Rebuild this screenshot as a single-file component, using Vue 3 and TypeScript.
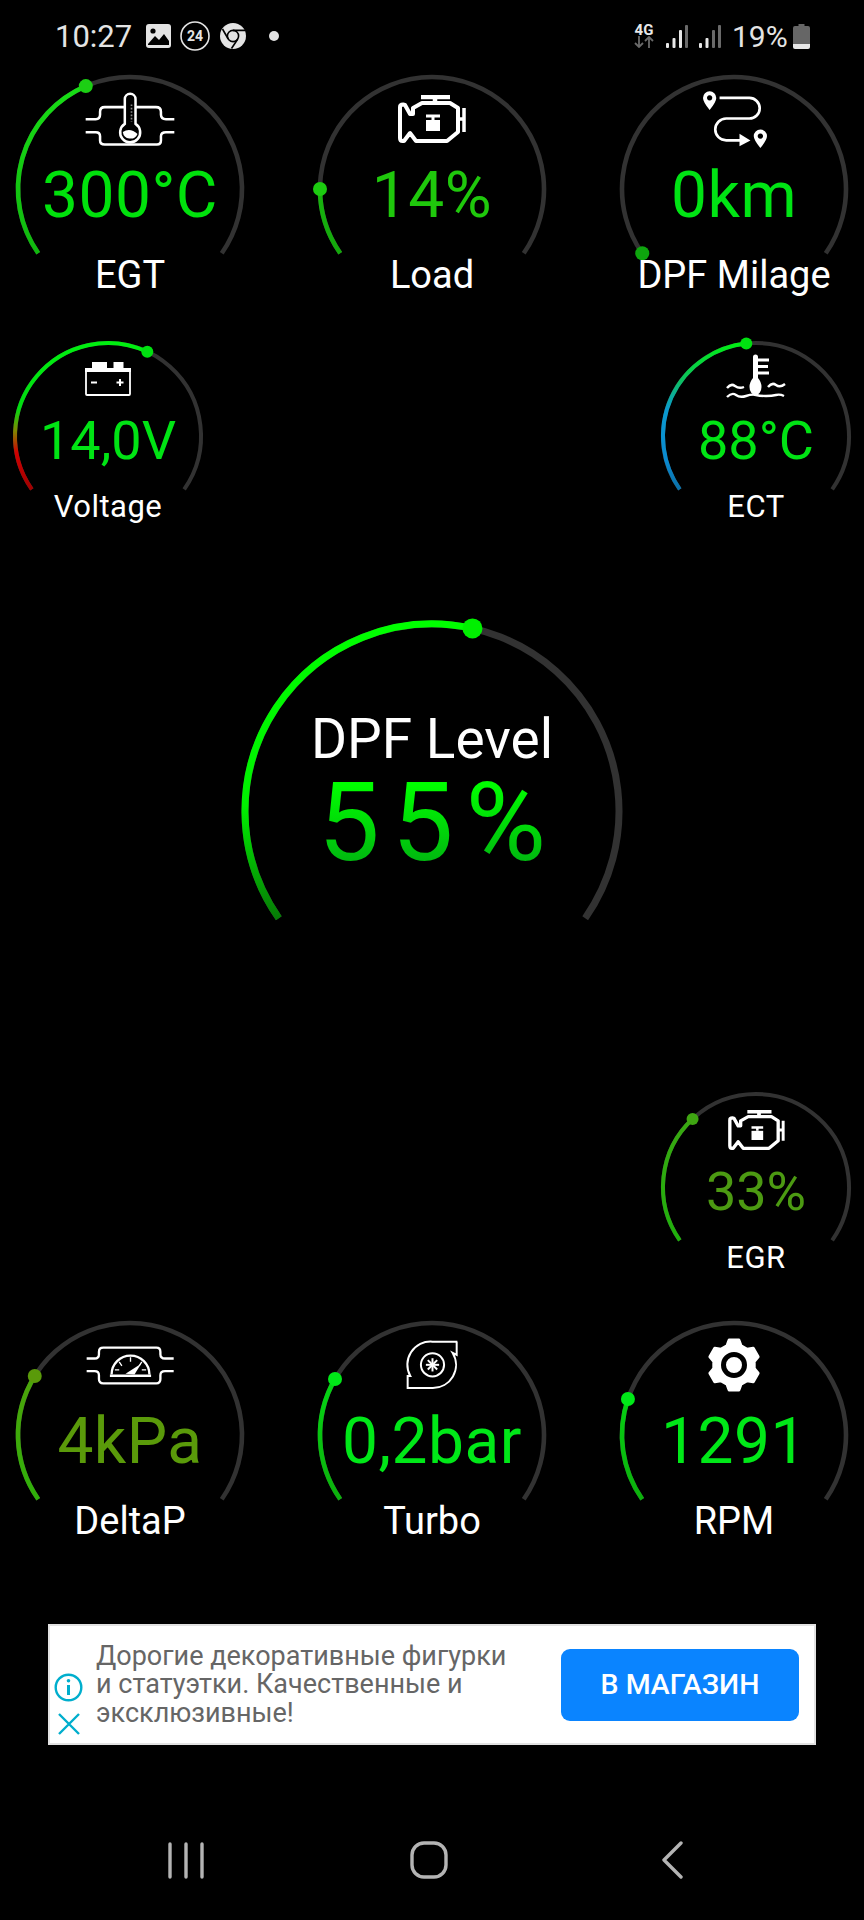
<script setup lang="ts">
interface Stop {
  at: number
  color: string
}

interface Gauge {
  id: string
  label: string
  value: string
  icon: string
  size: 'large' | 'medium'
  t: number
  valueColor: string
  dotColor: string
  stops: Stop[]
}

const flat = (top: string, bottom: string): Stop[] => [
  { at: 0, color: top },
  { at: 1, color: bottom },
]

const topRow: Gauge[] = [
  { id: 'egt', label: 'EGT', value: '300°C', icon: 'egt', size: 'large', t: 0.407, valueColor: '#00e20c', dotColor: '#1ccf14', stops: flat('#18e016', '#10b80e') },
  { id: 'load', label: 'Load', value: '14%', icon: 'engine', size: 'large', t: 0.14, valueColor: '#1fc80c', dotColor: '#1ccb10', stops: flat('#1ccb10', '#14a80c') },
  { id: 'milage', label: 'DPF Milage', value: '0km', icon: 'route', size: 'large', t: 0, valueColor: '#00e414', dotColor: '#0ea50e', stops: flat('#0ea50e', '#0ea50e') },
]

const voltage: Gauge = {
  id: 'voltage', label: 'Voltage', value: '14,0V', icon: 'battery', size: 'medium', t: 0.6, valueColor: '#00e414', dotColor: '#00e010',
  stops: [
    { at: 0, color: '#00f010' },
    { at: 0.45, color: '#00dc10' },
    { at: 0.6, color: '#7f8a00' },
    { at: 0.75, color: '#d00000' },
    { at: 1, color: '#a00000' },
  ],
}

const ect: Gauge = {
  id: 'ect', label: 'ECT', value: '88°C', icon: 'coolant', size: 'medium', t: 0.476, valueColor: '#00e414', dotColor: '#00e010',
  stops: [
    { at: 0, color: '#00f010' },
    { at: 0.26, color: '#0cc060' },
    { at: 0.46, color: '#0a9ad0' },
    { at: 0.8, color: '#0a8ad0' },
    { at: 1, color: '#0a70a8' },
  ],
}

const egr: Gauge = {
  id: 'egr', label: 'EGR', value: '33%', icon: 'engine', size: 'medium', t: 0.328, valueColor: '#4c9a12', dotColor: '#3fa512', stops: flat('#3fa512', '#1fb10c'),
}

const bottomRow: Gauge[] = [
  { id: 'delta', label: 'DeltaP', value: '4kPa', icon: 'pressure', size: 'large', t: 0.267, valueColor: '#5a9a0a', dotColor: '#5a9a0a', stops: flat('#5a9f0a', '#2fb00a') },
  { id: 'turbo', label: 'Turbo', value: '0,2bar', icon: 'turbo', size: 'large', t: 0.26, valueColor: '#00e818', dotColor: '#00e818', stops: flat('#00e818', '#0cb00c') },
  { id: 'rpm', label: 'RPM', value: '1291', icon: 'gear', size: 'large', t: 0.215, valueColor: '#00e818', dotColor: '#00e818', stops: flat('#00e818', '#0cb00c') },
]

const specs = {
  large: { w: 240, h: 219, cy: 113, r: 112, stroke: 4.6, dot: 7 },
  medium: { w: 192, h: 181, cy: 94, r: 93, stroke: 4, dot: 6 },
}

function pt(cx: number, cy: number, r: number, t: number) {
  const a = ((215 - 250 * t) * Math.PI) / 180
  return { x: cx + r * Math.cos(a), y: cy - r * Math.sin(a) }
}

function arc(cx: number, cy: number, r: number, from: number, to: number) {
  const a = pt(cx, cy, r, from)
  const b = pt(cx, cy, r, to)
  const large = (to - from) * 250 > 180 ? 1 : 0
  return `M${a.x.toFixed(2)} ${a.y.toFixed(2)} A${r} ${r} 0 ${large} 1 ${b.x.toFixed(2)} ${b.y.toFixed(2)}`
}

function gaugeArc(g: Gauge, from: number, to: number) {
  const s = specs[g.size]
  return arc(s.w / 2, s.cy, s.r, from, to)
}

function dotAt(g: Gauge) {
  const s = specs[g.size]
  return pt(s.w / 2, s.cy, s.r, g.t)
}

const bigEnd = pt(192, 190, 187, 0.55)

const gearPath = (() => {
  const parts: string[] = []
  for (let i = 0; i < 6; i++) {
    const c = 60 * i - 90
    const seq: [number, number][] = [[c - 20, 20.5], [c - 11, 25.5], [c + 11, 25.5], [c + 20, 20.5]]
    for (const [deg, r] of seq) {
      const a = (deg * Math.PI) / 180
      parts.push(`${parts.length ? 'L' : 'M'}${(27 + r * Math.cos(a)).toFixed(2)} ${(27 + r * Math.sin(a)).toFixed(2)}`)
    }
  }
  return parts.join(' ') + ' Z'
})()

const turboBlades = [0, 45, 90, 135]
</script>

<template>
  <div class="screen">
    <div class="status">
      <span class="time">10:27</span>
      <svg class="st-image" width="25" height="24" viewBox="0 0 25 24">
        <rect width="25" height="24" rx="3" fill="#e4e4e4" />
        <circle cx="7" cy="7" r="2.6" fill="#000" />
        <path d="M2 20 L9 12 L13 16 L18 10 L23 17 V21 H2 Z" fill="#000" />
      </svg>
      <svg class="st-count" width="30" height="30" viewBox="0 0 30 30">
        <circle cx="15" cy="15" r="14" fill="none" stroke="#e4e4e4" stroke-width="1.6" />
        <text x="15" y="20" text-anchor="middle" class="count-text">24</text>
      </svg>
      <svg class="st-chrome" width="26" height="26" viewBox="0 0 26 26">
        <circle cx="13" cy="13" r="13" fill="#e4e4e4" />
        <circle cx="13" cy="13" r="5.6" fill="none" stroke="#000" stroke-width="1.6" />
        <path d="M13 7.4 H25 M8.2 16 L2.5 6 M17.8 16 L11.5 25.5" stroke="#000" stroke-width="1.6" />
      </svg>
      <span class="st-dot"></span>

      <div class="status-right">
        <div class="net">
          <span class="net-type">4G</span>
          <svg width="20" height="12" viewBox="0 0 20 12">
            <path d="M5 0 V11 M1 7 L5 11 L9 7" fill="none" stroke="#6a6a6a" stroke-width="1.8" />
            <path d="M15 12 V1 M11 5 L15 1 L19 5" fill="none" stroke="#6a6a6a" stroke-width="1.8" />
          </svg>
        </div>
        <svg class="signal" width="22" height="23" viewBox="0 0 22 23">
          <rect x="0" y="18" width="3" height="5" rx="1" fill="#e8e8e8" />
          <rect x="6.5" y="13" width="3" height="10" rx="1" fill="#e8e8e8" />
          <rect x="13" y="5" width="3" height="18" rx="1" fill="#e8e8e8" />
          <rect x="19" y="0" width="3" height="23" rx="1" fill="#6a6a6a" />
        </svg>
        <svg class="signal" width="22" height="23" viewBox="0 0 22 23">
          <rect x="0" y="18" width="3" height="5" rx="1" fill="#e8e8e8" />
          <rect x="6.5" y="13" width="3" height="10" rx="1" fill="#e8e8e8" />
          <rect x="13" y="5" width="3" height="18" rx="1" fill="#6a6a6a" />
          <rect x="19" y="0" width="3" height="23" rx="1" fill="#6a6a6a" />
        </svg>
        <span class="percent">19%</span>
        <svg class="battery" width="17" height="25" viewBox="0 0 17 25">
          <path d="M5.5 0 H11.5 V2 H15 Q17 2 17 4 V20 H0 V4 Q0 2 2 2 H5.5 Z" fill="#666" />
          <path d="M0 20 H17 V23 Q17 25 15 25 H2 Q0 25 0 23 Z" fill="#e8e8e8" />
        </svg>
      </div>
    </div>

    <template v-for="(row, idx) in [topRow, [voltage, ect], [egr], bottomRow]" :key="idx">
      <div class="gauge-row" :class="['row-' + idx]">
        <div v-for="g in row" :key="g.id" class="gauge" :class="g.size">
          <svg class="dial" :width="specs[g.size].w" :height="specs[g.size].h">
            <defs>
              <linearGradient :id="'grad-' + g.id" gradientUnits="userSpaceOnUse" x1="0" x2="0" y1="0" :y2="specs[g.size].cy + specs[g.size].r * 0.574">
                <stop v-for="s in g.stops" :key="s.at" :offset="s.at" :stop-color="s.color" />
              </linearGradient>
            </defs>
            <path :d="gaugeArc(g, 0, 1)" fill="none" stroke="#323232" :stroke-width="specs[g.size].stroke" />
            <path v-if="g.t > 0" :d="gaugeArc(g, 0, g.t)" fill="none" :stroke="'url(#grad-' + g.id + ')'" :stroke-width="specs[g.size].stroke" />
            <circle :cx="dotAt(g).x" :cy="dotAt(g).y" :r="specs[g.size].dot" :fill="g.dotColor" />
          </svg>

          <div class="icon-slot">
            <svg v-if="g.icon === 'egt'" class="icon" width="92" height="57" viewBox="70 20 275 170" fill="none" stroke="#fff" stroke-width="7.500">
              <path d="M75 104 H105 Q118 104 118 90 V82 Q118 68 132 68 H285 Q300 68 300 82 V90 Q300 104 315 104 H340" />
              <path d="M75 143 H105 Q118 143 118 155 V168 Q118 180 132 180 H288 Q300 180 300 168 V155 Q300 143 315 143 H340" />
              <path d="M192 118 V44 a16 16 0 0 1 32 0 V118 a30 30 0 1 1 -32 0 Z" fill="#000" />
              <path d="M186 142 Q208 128 230 148 a23 23 0 0 1 -44 -6 Z" fill="#fff" stroke="none" />
              <path d="M212 60 V112" stroke="#888" stroke-width="5" stroke-dasharray="5 5" />
            </svg>

            <svg v-else-if="g.icon === 'engine'" class="icon engine" viewBox="0 0 68 48" fill="none" stroke="#fff" stroke-width="4" stroke-linejoin="round">
              <path d="M23 2 H52 M37 2 V9" stroke-width="4.500" />
              <path d="M2 12 Q2 9.500 5 9.500 L7 10 L12 19 H15 V13 L24 8 H52 L60 13 V37 L49 46 H18 L12 38 L6 46 H4.500 Q2 46 2 43 Z" />
              <path d="M60 24 H65 M66 13 V37" stroke-width="3.500" />
              <path d="M28 21 H42 M35 21 V25" stroke-width="3" />
              <rect x="28" y="25" width="14" height="11" fill="#fff" stroke="none" />
            </svg>

            <svg v-else-if="g.icon === 'route'" class="icon" width="73" height="63" viewBox="50 20 220 190" fill="none" stroke="#fff" stroke-width="8">
              <path d="M115 50 H205 A31 31 0 0 1 205 112 H135 A33 33 0 0 0 135 178 H178" />
              <path d="M175 158 L208 178 L175 196 Z" fill="#fff" stroke="none" />
              <path fill-rule="evenodd" stroke="none" fill="#fff" d="M85 30 a20 20 0 0 1 20 20 q0 12 -20 36 q-20 -24 -20 -36 a20 20 0 0 1 20 -20 Z M85 42 a8 8 0 1 0 0.01 0 Z" />
              <path fill-rule="evenodd" stroke="none" fill="#fff" d="M238 145 a20 20 0 0 1 20 20 q0 12 -20 36 q-20 -24 -20 -36 a20 20 0 0 1 20 -20 Z M238 157 a8 8 0 1 0 0.01 0 Z" />
            </svg>

            <svg v-else-if="g.icon === 'battery'" class="icon" width="46" height="34" viewBox="0 0 46 34">
              <rect x="7" y="0" width="15" height="6" fill="#fff" />
              <rect x="28.5" y="0" width="10" height="6" fill="#fff" />
              <rect x="1" y="7" width="44" height="26" rx="1" fill="none" stroke="#fff" stroke-width="1.8" />
              <rect x="0" y="6" width="46" height="4" fill="#fff" />
              <path d="M6 20.5 H12 M31.5 20.5 H38.5 M35 17 V24" stroke="#fff" stroke-width="2" />
            </svg>

            <svg v-else-if="g.icon === 'coolant'" class="icon" width="62" height="50" viewBox="0 0 62 50" fill="none" stroke="#fff">
              <path d="M28 3 a2.500 2.500 0 0 1 5 0 V24 Q36.500 28 36.500 33 a6 8 0 0 1 -12 0 Q24.500 28 28 24 Z" fill="#fff" stroke="none" />
              <path d="M33 6 H44 M33 12.500 H43 M33 19 H44" stroke-width="3" />
              <path d="M2 34 q4 -5 8 -2 t9 1 M43 33 q4 -5 8 -2 t9 -1" stroke-width="2.4" />
              <path d="M2 43 q5 -5 9 -2 t10 1 t10 -1 t10 1 t10 -1 t8 1" stroke-width="2.4" />
            </svg>

            <svg v-else-if="g.icon === 'pressure'" class="icon" width="93" height="42" viewBox="40 25 280 125" fill="none" stroke="#fff" stroke-width="7">
              <path d="M48 68 H72 Q85 68 85 55 V48 Q85 35 98 35 H258 Q270 35 270 48 V55 Q270 68 284 68 H310" />
              <path d="M48 106 H72 Q85 106 85 118 V130 Q85 143 98 143 H258 Q270 143 270 130 V118 Q270 106 284 106 H310" />
              <path d="M123 116 A57 57 0 0 1 237 116" />
              <path d="M118 120 H242" stroke-width="8" />
              <path d="M180 64 V78 M146 78 L154 90 M133 102 H146 M214 78 L206 90 M227 102 H214" stroke-width="4" />
              <path d="M165 114 L212 84 L192 116 Z" fill="#fff" stroke="none" />
            </svg>

            <svg v-else-if="g.icon === 'turbo'" class="icon" width="57" height="53" viewBox="40 10 170 160" fill="none" stroke="#fff" stroke-width="6">
              <path d="M200 18 H125 A70 70 0 0 0 58 122 L50 122 V158 H125 A70 70 0 0 0 186 52 L198 58 V18" />
              <circle cx="125" cy="88" r="35" />
              <g stroke-width="6">
                <path v-for="deg in turboBlades" :key="deg" d="M105 88 H145" :transform="`rotate(${deg} 125 88)`" />
              </g>
            </svg>

            <svg v-else-if="g.icon === 'gear'" class="icon" width="54" height="54" viewBox="0 0 54 54">
              <path :d="gearPath" fill="#fff" stroke="#fff" stroke-width="3" stroke-linejoin="round" />
              <circle cx="27" cy="27" r="10.500" fill="#fff" stroke="#000" stroke-width="5" />
            </svg>
          </div>

          <div class="value" :style="{ color: g.valueColor }">{{ g.value }}</div>
          <div class="label">{{ g.label }}</div>
        </div>
      </div>

      <div v-if="idx === 1" class="level">
        <svg class="dial" width="384" height="310">
          <defs>
            <linearGradient id="grad-level" gradientUnits="userSpaceOnUse" x1="0" x2="0" y1="0" y2="298">
              <stop offset="0" stop-color="#00ff00" />
              <stop offset="0.62" stop-color="#00f000" />
              <stop offset="1" stop-color="#067a06" />
            </linearGradient>
          </defs>
          <path :d="arc(192, 190, 187, 0, 1)" fill="none" stroke="#323232" stroke-width="7" />
          <path :d="arc(192, 190, 187, 0, 0.55)" fill="none" stroke="url(#grad-level)" stroke-width="7" />
          <circle :cx="bigEnd.x" :cy="bigEnd.y" r="10" fill="#00f000" />
        </svg>
        <div class="level-label">DPF Level</div>
        <div class="level-value">55%</div>
      </div>
    </template>

    <div class="ad">
      <div class="ad-icons">
        <svg width="29" height="29" viewBox="0 0 29 29" fill="none" stroke="#00aecd" stroke-width="2.4">
          <circle cx="14.500" cy="14.500" r="12.800" />
          <path d="M14.500 12 V22" stroke-width="3" />
          <circle cx="14.500" cy="7.800" r="1.800" fill="#00aecd" stroke="none" />
        </svg>
        <svg width="24" height="22" viewBox="0 0 24 22" fill="none" stroke="#00aecd" stroke-width="2.4">
          <path d="M2 1 L22 21 M22 1 L2 21" />
        </svg>
      </div>
      <p class="ad-text">Дорогие декоративные фигурки<br />и статуэтки. Качественные и<br />эксклюзивные!</p>
      <button class="ad-button">В МАГАЗИН</button>
    </div>

    <nav class="nav">
      <svg width="36" height="37" viewBox="0 0 36 37" stroke="#b4b4b4" stroke-width="3.4" stroke-linecap="round">
        <path d="M2 2 V35 M18 2 V35 M34 2 V35" />
      </svg>
      <svg width="38" height="38" viewBox="0 0 38 38">
        <rect x="2" y="2" width="34" height="34" rx="12" fill="none" stroke="#b4b4b4" stroke-width="3.4" />
      </svg>
      <svg width="22" height="38" viewBox="0 0 22 38">
        <path d="M20 2 L3 19 L20 36" fill="none" stroke="#b4b4b4" stroke-width="3.400" stroke-linecap="round" stroke-linejoin="round" />
      </svg>
    </nav>
  </div>
</template>

<style scoped>
.screen {
  width: 864px;
  min-height: 1920px;
  background: #000;
  font-family: Roboto, "Noto Sans", sans-serif;
  color: #fff;
  overflow: hidden;
}

.status {
  display: flex;
  align-items: center;
  height: 48px;
  padding: 12px 54px 16px 55px;
  color: #e4e4e4;
}

.time {
  font-size: 31px;
  width: 91px;
}

.st-count {
  margin-left: 9px;
}

.count-text {
  font-size: 14px;
  font-weight: 700;
  fill: #e4e4e4;
}

.st-chrome {
  margin-left: 10px;
}

.st-dot {
  width: 10px;
  height: 10px;
  border-radius: 50%;
  background: #e4e4e4;
  margin-left: 23px;
}

.status-right {
  margin-left: auto;
  display: flex;
  align-items: center;
}

.net {
  display: flex;
  flex-direction: column;
  align-items: center;
  width: 20px;
  margin-right: 12px;
}

.net-type {
  font-size: 15px;
  font-weight: 700;
  line-height: 12px;
  color: #e8e8e8;
}

.signal {
  margin-right: 11px;
}

.percent {
  font-size: 30px;
  width: 61px;
}

.gauge-row {
  display: flex;
  justify-content: space-between;
}

.row-0 {
  padding: 0 10px;
}

.row-1 {
  margin-top: 47px;
  padding: 0 12px;
}

.row-2 {
  margin-top: 162px;
  justify-content: flex-end;
  padding-right: 12px;
}

.row-3 {
  margin-top: 48px;
  padding: 0 10px;
}

.gauge {
  position: relative;
  display: flex;
  flex-direction: column;
  align-items: center;
}

.dial {
  position: absolute;
  left: 0;
  top: 0;
  overflow: visible;
}

.icon-slot {
  position: relative;
  display: flex;
  align-items: center;
  justify-content: center;
}

.large {
  width: 240px;
  height: 219px;
  padding-top: 14px;
  box-sizing: border-box;
}

.large .icon-slot {
  height: 58px;
}

.large .value {
  margin-top: 16px;
  font-size: 64px;
  line-height: 63px;
  letter-spacing: 0.5px;
}

.large .label {
  margin-top: 28px;
  font-size: 38px;
  line-height: 40px;
}

.medium {
  width: 192px;
  height: 181px;
  padding-top: 10px;
  box-sizing: border-box;
}

.medium .icon-slot {
  height: 54px;
}

.medium .value {
  margin-top: 9px;
  font-size: 54px;
  line-height: 51px;
}

.medium .label {
  margin-top: 25px;
  font-size: 31px;
  line-height: 32px;
  letter-spacing: 0.5px;
}

.value,
.label {
  position: relative;
  white-space: nowrap;
}

.large .engine {
  width: 68px;
  height: 48px;
}

.medium .engine {
  width: 57px;
  height: 40px;
}

.level {
  position: relative;
  width: 384px;
  height: 310px;
  margin: 98px auto 0;
  padding-top: 90px;
  box-sizing: border-box;
  display: flex;
  flex-direction: column;
  align-items: center;
}

.level-label {
  position: relative;
  font-size: 55px;
  line-height: 57px;
}

.level-value {
  position: relative;
  margin-left: 12px;
  font-size: 110px;
  line-height: 110px;
  letter-spacing: 12px;
  background: linear-gradient(#00ff00 15%, #00b810 85%);
  -webkit-background-clip: text;
  background-clip: text;
  color: transparent;
}

.ad {
  display: flex;
  align-items: stretch;
  height: 121px;
  margin: 83px 48px 0 48px;
  background: #fff;
  border: 2px solid #e2e2e2;
  box-sizing: border-box;
}

.ad-icons {
  display: flex;
  flex-direction: column;
  justify-content: flex-end;
  align-items: center;
  gap: 11px;
  width: 29px;
  margin-left: 4px;
  padding-bottom: 8px;
}

.ad-text {
  margin: 0 0 0 13px;
  align-self: center;
  font-size: 27px;
  line-height: 28.5px;
  color: #666;
  white-space: nowrap;
}

.ad-button {
  align-self: center;
  margin-left: auto;
  margin-right: 15px;
  width: 238px;
  height: 72px;
  border: none;
  border-radius: 9px;
  background: #0a84ff;
  color: #fff;
  font-family: inherit;
  font-size: 28.5px;
  font-weight: 500;
}

.nav {
  display: grid;
  grid-template-columns: repeat(3, 243px);
  justify-items: center;
  align-items: center;
  margin-top: 96px;
  padding-left: 64px;
}
</style>

<style>
html,
body {
  background: #000;
}
</style>
